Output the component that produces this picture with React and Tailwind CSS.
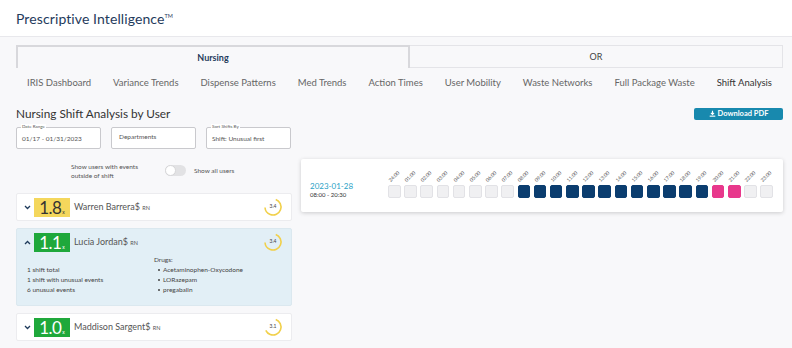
import React from 'react';

const hours = ['24:00','01:00','02:00','03:00','04:00','05:00','06:00','07:00','08:00','09:00','10:00','11:00','12:00','13:00','14:00','15:00','16:00','17:00','18:00','19:00','20:00','21:00','22:00','23:00'];

function cellColor(i) {
    if (i >= 8 && i <= 19) return 'bg-[#0b3d6f] border-[#0b3d6f]';
    if (i === 20 || i === 21) return 'bg-[#e8388c] border-[#e8388c]';
    return 'bg-[#f0f0f2] border-[#e2e2e6]';
}

function Ring({ value }) {
    const c = 2 * Math.PI * 8;
    const len = (value / 5) * c;
    return (
        <div className="relative w-[20px] h-[20px]">
            <svg width="20" height="20" viewBox="0 0 20 20" className="absolute inset-0">
                <circle cx="10" cy="10" r="8" fill="none" stroke="#f1d04a" strokeWidth="1.6"
                    strokeDasharray={`${len} ${c}`} transform="rotate(-70 10 10)" />
            </svg>
            <span className="absolute inset-0 flex items-center justify-center text-[5px] text-[#444]">{value}</span>
        </div>
    );
}

function Chevron({ up }) {
    return (
        <svg width="7" height="5" viewBox="0 0 7 5" className="shrink-0">
            <path d={up ? 'M1 4 L3.5 1.5 L6 4' : 'M1 1 L3.5 3.5 L6 1'} fill="none" stroke="#1f3b5c" strokeWidth="1.3" />
        </svg>
    );
}

function UserRow({ score, color, name, ring, up }) {
    const badge = color === 'yellow' ? 'bg-[#f4d75c] text-[#333]' : 'bg-[#1fa83b] text-white';
    return (
        <div className="flex items-center h-[26px] pl-[7px] pr-[8px]">
            <Chevron up={up} />
            <div className={`ml-[3px] w-[36px] h-[19px] flex items-end justify-center pb-[1px] ${badge}`}>
                <span className="text-[17px] leading-[17px] tracking-[-0.5px]">{score}</span>
                <span className="text-[5px] leading-[7px] ml-[1px]">x</span>
            </div>
            <div className="ml-[4px] text-[9px] text-[#555]">
                {name} <span className="text-[5.5px]">RN</span>
            </div>
            <div className="ml-auto">
                <Ring value={ring} />
            </div>
        </div>
    );
}

export default function App() {
    const navItems = ['IRIS Dashboard','Variance Trends','Dispense Patterns','Med Trends','Action Times','User Mobility','Waste Networks','Full Package Waste','Shift Analysis'];

    return (
        <div className="w-[792px] h-[348px] overflow-hidden bg-[#f8f8fa] font-['Lato',sans-serif]">
            {/* Header */}
            <div className="h-[37px] bg-white border-b border-[#e8e8ec] flex items-center px-4">
                <span className="text-[14px] text-[#1f3b5c] tracking-[0.1px]">Prescriptive Intelligence</span>
                <span className="text-[5.5px] text-[#1f3b5c] self-start mt-[12px]">TM</span>
            </div>

            <div className="pl-4 pr-[9px]">
                {/* Tabs */}
                <div className="flex mt-[8px] h-[23px]">
                    <div className="w-[394px] border-l-2 border-t-2 border-r-2 border-[#d8d8dc] flex items-center justify-center text-[9px] font-bold text-[#1f3b5c]">
                        Nursing
                    </div>
                    <div className="flex-1 border border-[#e4e4e8] border-l-0 flex items-center justify-center text-[9px] text-[#444]">
                        OR
                    </div>
                </div>

                {/* Nav */}
                <div className="flex justify-between px-[11px] h-[30px] items-center text-[9.5px] text-[#666]">
                    {navItems.map((n) => (
                        <span key={n} className={n === 'Shift Analysis' ? 'text-[#333]' : ''}>{n}</span>
                    ))}
                </div>

                {/* Title */}
                <div className="flex items-center justify-between h-[18px] mt-[7px]">
                    <h2 className="text-[11.8px] text-[#333]">Nursing Shift Analysis by User</h2>
                    <button className="w-[89px] h-[12px] bg-[#1889ae] rounded-[2px] text-white text-[7.5px] font-bold flex items-center justify-center gap-[2px] -mt-[1px]">
                        <svg width="7" height="7" viewBox="0 0 10 10">
                            <path d="M5 1 V6 M2.8 4 L5 6.3 L7.2 4" fill="none" stroke="white" strokeWidth="1.6" />
                            <rect x="1" y="8" width="8" height="1.6" fill="white" />
                        </svg>
                        Download PDF
                    </button>
                </div>

                {/* Filters */}
                <div className="flex gap-[10px] mt-[4px]">
                    {[['Date Range','01/17 - 01/31/2023'],['','Departments'],['Sort Shifts By','Shift: Unusual first']].map(([label, val], i) => (
                        <div key={i} className="relative w-[85px] h-[22px] border border-[#c9c9cd] rounded-[2px] bg-white flex items-center px-[5px]">
                            {label && (
                                <span className="absolute -top-[4px] left-[4px] bg-white px-[1px] text-[4.5px] leading-[6px] text-[#555]">{label}</span>
                            )}
                            <span className={`text-[6.5px] text-[#555] ${i === 1 ? 'mt-[-3px] ml-[2px]' : 'mt-[2px]'}`}>{val}</span>
                        </div>
                    ))}
                </div>

                {/* Lower */}
                <div className="flex gap-[9px] mt-[8px]">
                    {/* Left column */}
                    <div className="w-[276px] shrink-0">
                        <div className="flex items-center h-[27px] pl-[55px]">
                            <div className="text-[6.5px] leading-[9px] text-[#555] w-[88px]">
                                Show users with events<br />outside of shift
                            </div>
                            <div className="ml-[6px] w-[21px] h-[11px] rounded-full bg-[#e2e2e4] relative">
                                <div className="absolute left-0 top-0 w-[11px] h-[11px] rounded-full bg-white border border-[#d6d6d8]"></div>
                            </div>
                            <span className="ml-[8px] text-[6.5px] text-[#555]">Show all users</span>
                        </div>

                        <div className="flex flex-col gap-[7px] mt-[9px]">
                            <div className="bg-white border border-[#ececef] rounded-[2px]">
                                <UserRow score="1.8" color="yellow" name="Warren Barrera$" ring={3.4} />
                            </div>
                            <div className="bg-[#e2eff6] border border-[#dbe8ef] rounded-[2px] h-[78px]">
                                <UserRow score="1.1" color="green" name="Lucia Jordan$" ring={3.4} up />
                                <div className="flex pl-[10px] mt-[2px] text-[6.5px] text-[#444]">
                                    <div className="w-[127px] pt-[8px] leading-[10px]">
                                        <div>1 shift total</div>
                                        <div>1 shift with unusual events</div>
                                        <div>6 unusual events</div>
                                    </div>
                                    <div className="leading-[10px]">
                                        <div className="-mt-[2px]">Drugs:</div>
                                        <ul className="pl-[4px]">
                                            {['Acetaminophen-Oxycodone','LORazepam','pregabalin'].map((d) => (
                                                <li key={d} className="flex items-center gap-[3px]">
                                                    <span className="w-[2px] h-[2px] rounded-full bg-[#444]"></span>{d}
                                                </li>
                                            ))}
                                        </ul>
                                    </div>
                                </div>
                            </div>
                            <div className="bg-white border border-[#ececef] rounded-[2px]">
                                <UserRow score="1.0" color="green" name="Maddison Sargent$" ring={3.1} />
                            </div>
                            <div className="bg-white border border-[#ececef] rounded-[2px] h-[26px] pl-[16px] pt-[3px]">
                                <div className="w-[36px] h-[19px] bg-[#f4d75c]"></div>
                            </div>
                        </div>
                    </div>

                    {/* Right card */}
                    <div className="flex-1 self-start mt-[2px]">
                        <div className="bg-white rounded-[2px] shadow-[0_1px_4px_rgba(0,0,0,0.18)] h-[53px] flex items-end pb-[14px] pl-[9px]">
                            <div className="w-[78px] mb-[-1px]">
                                <div className="text-[8px] leading-[9px] text-[#2a9fc6]">2023-01-28</div>
                                <div className="text-[6px] leading-[8px] text-[#333]">08:00 - 20:30</div>
                            </div>
                            <div className="flex gap-[3.6px]">
                                {hours.map((h, i) => (
                                    <div key={h} className="flex flex-col items-center w-[12.6px]">
                                        <div className="h-[18px] flex items-center justify-center">
                                            <span className="block -rotate-45 text-[5px] text-[#555] whitespace-nowrap">{h}</span>
                                        </div>
                                        <div className={`w-[12.6px] h-[12.6px] rounded-[2px] border ${cellColor(i)}`}></div>
                                    </div>
                                ))}
                            </div>
                        </div>
                    </div>
                </div>
            </div>
        </div>
    );
}
